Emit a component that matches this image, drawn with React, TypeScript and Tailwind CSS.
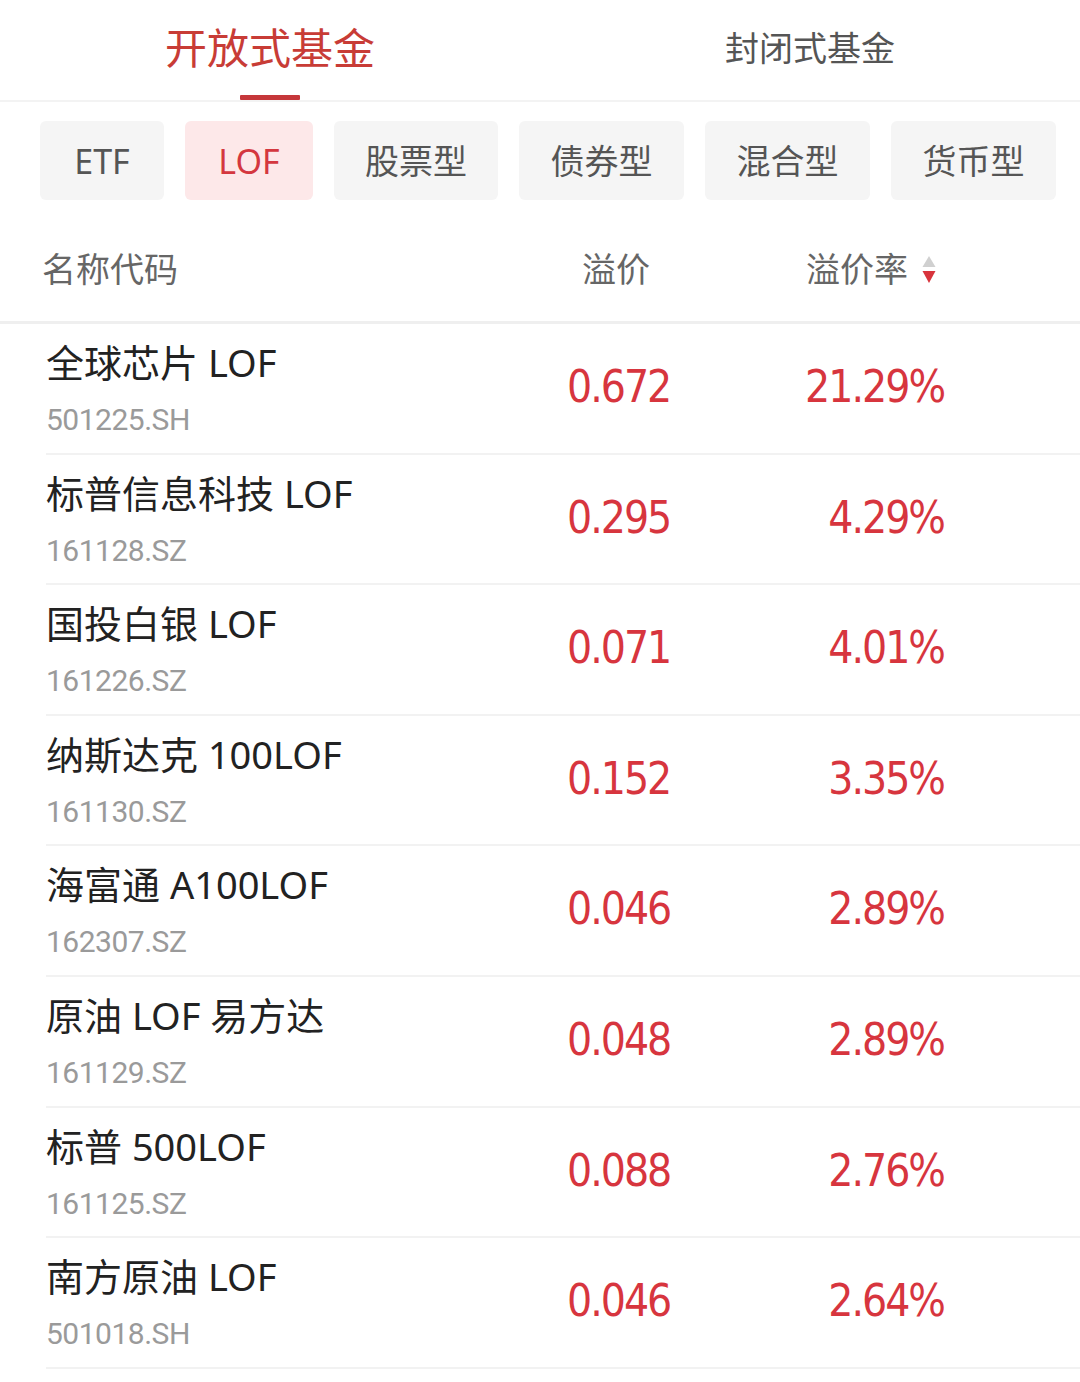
import React from 'react'

const rows = [
  { name: '全球芯片 LOF', code: '501225.SH', premium: '0.672', rate: '21.29%' },
  { name: '标普信息科技 LOF', code: '161128.SZ', premium: '0.295', rate: '4.29%' },
  { name: '国投白银 LOF', code: '161226.SZ', premium: '0.071', rate: '4.01%' },
  { name: '纳斯达克 100LOF', code: '161130.SZ', premium: '0.152', rate: '3.35%' },
  { name: '海富通 A100LOF', code: '162307.SZ', premium: '0.046', rate: '2.89%' },
  { name: '原油 LOF 易方达', code: '161129.SZ', premium: '0.048', rate: '2.89%' },
  { name: '标普 500LOF', code: '161125.SZ', premium: '0.088', rate: '2.76%' },
  { name: '南方原油 LOF', code: '501018.SH', premium: '0.046', rate: '2.64%' },
]

const chips = [
  { label: 'ETF', w: 'w-[124px]', active: false },
  { label: 'LOF', w: 'w-[128px]', active: true },
  { label: '股票型', w: 'w-[164px]', active: false },
  { label: '债券型', w: 'w-[165px]', active: false },
  { label: '混合型', w: 'w-[165px]', active: false },
  { label: '货币型', w: 'w-[165px]', active: false },
]

const cjk = "font-['Noto_Sans','Noto_Sans_CJK_SC',sans-serif]"
const num = "font-['DejaVu_Sans',sans-serif] font-stretch-condensed"

function SortIcon() {
  return (
    <svg width="16" height="32" viewBox="0 0 16 32" className="ml-[13px] mt-[4px]">
      <path d="M8 1 L14.5 12 L1.5 12 Z" fill="#d0d0d0" />
      <path d="M1.5 16 L14.5 16 L8 28 Z" fill="#d8343c" />
    </svg>
  )
}

export default function App() {
  return (
    <div className={`w-[1080px] h-[1382px] bg-white overflow-hidden ${cjk}`}>
      {/* Top tabs */}
      <div className="h-[102px] flex border-b-2 border-[#f3f3f3]">
        <div className="flex-1 flex flex-col items-center">
          <div className="h-[95px] flex items-center text-[42px] leading-none text-[#c83c36]">
            开放式基金
          </div>
          <div className="w-[60px] h-[5px] bg-[#c5373a] rounded-[1px]" />
        </div>
        <div className="flex-1 flex flex-col items-center">
          <div className="h-[95px] flex items-center text-[34px] leading-none text-[#555]">
            封闭式基金
          </div>
        </div>
      </div>

      {/* Category chips */}
      <div className="flex gap-[21px] pl-[40px] pt-[19px] overflow-hidden">
        {chips.map((c) => (
          <div
            key={c.label}
            className={`${c.w} shrink-0 h-[79px] rounded-[6px] flex items-center justify-center text-[34px] leading-none ${
              c.active ? 'bg-[#fde8e9] text-[#d4373f]' : 'bg-[#f5f5f5] text-[#555]'
            }`}
          >
            {c.label}
          </div>
        ))}
      </div>

      {/* Column headers */}
      <div className="h-[124px] pt-[16px] flex items-center border-b-[3px] border-[#efefef] text-[34px] leading-none text-[#666]">
        <div className="pl-[42px] w-[582px]">名称代码</div>
        <div className="w-[224px]">溢价</div>
        <div className="flex items-center">
          溢价率
          <SortIcon />
        </div>
      </div>

      {/* Fund rows */}
      <div>
        {rows.map((r) => (
          <div key={r.code} className="ml-[46px] h-[130.6px] border-b-2 border-[#f2f2f2] flex items-start">
            <div className="w-[521px] flex flex-col pt-[19px]">
              <div className="text-[38px] leading-none text-[#222]">{r.name}</div>
              <div className="font-['Roboto',sans-serif] text-[30px] leading-none text-[#9a9a9a] tracking-[-0.5px] mt-[24px]">
                {r.code}
              </div>
            </div>
            <div className={`w-[150px] pt-[41px] ${num} text-[44px] leading-none text-[#d7353e] tracking-[-2px]`}>
              {r.premium}
            </div>
            <div className={`w-[227px] pt-[41px] text-right ${num} text-[44px] leading-none text-[#d7353e] tracking-[-2px]`}>
              {r.rate}
            </div>
          </div>
        ))}
      </div>
    </div>
  )
}
